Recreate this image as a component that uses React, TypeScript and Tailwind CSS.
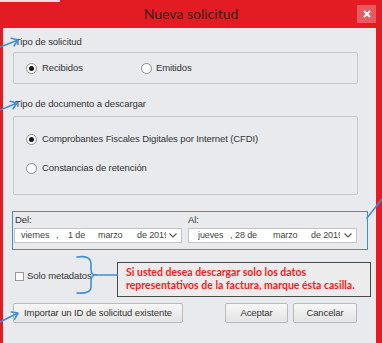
import React from "react";

function Radio({ checked }: { checked?: boolean }) {
  return (
    <span className="w-[11px] h-[11px] rounded-full border border-[#8c8c8c] bg-white flex items-center justify-center shrink-0">
      {checked && <span className="w-[5px] h-[5px] rounded-full bg-[#151515]" />}
    </span>
  );
}

function Chevron() {
  return (
    <svg width="8" height="5" viewBox="0 0 8 5" className="shrink-0">
      <path d="M0.5 0.5 L4 4 L7.5 0.5" fill="none" stroke="#555" strokeWidth="1.1" />
    </svg>
  );
}

function DateSelect({ parts }: { parts: [string, number][] }) {
  return (
    <div className="h-[15px] bg-white border border-[#c4c4c4] flex items-center text-[9px] text-[#444] whitespace-nowrap overflow-hidden">
      {parts.map(([t, w], i) => (
        <span key={i} className="overflow-hidden shrink-0" style={{ width: w }}>
          {t}
        </span>
      ))}
      <span className="ml-auto mr-[4px] flex">
        <Chevron />
      </span>
    </div>
  );
}

function Btn({ children, w }: { children: React.ReactNode; w: string }) {
  return (
    <button
      className={`${w} h-[20px] rounded-[2px] border border-[#b9b9b9] bg-gradient-to-b from-[#f7f7f7] to-[#e4e4e4] text-[9.5px] tracking-[-0.1px] text-[#333] flex items-center justify-center`}
    >
      {children}
    </button>
  );
}

export default function App() {
  return (
    <div
      className="relative w-[382px] h-[343px] bg-[#e31b23] overflow-hidden"
      style={{ fontFamily: '"Liberation Sans", Arial, sans-serif' }}
    >
      <div className="absolute left-0 top-0 w-[60px] h-[2px] bg-[#f4dede]" />
      {/* title bar */}
      <div className="relative h-[28px] flex items-center justify-center">
        <span className="text-[14px] text-[#3b1a1c] pb-[1px]" style={{ fontFamily: "Lato, sans-serif" }}>
          Nueva solicitud
        </span>
        <div className="absolute right-[6px] top-[5px] w-[19px] h-[18px] bg-[#e65a60] flex items-center justify-center">
          <svg width="8" height="8" viewBox="0 0 8 8">
            <path d="M1 1 L7 7 M7 1 L1 7" stroke="white" strokeWidth="2" />
          </svg>
        </div>
      </div>

      {/* content */}
      <div className="ml-[3px] mr-[6px] h-[315px] bg-[#e9eaee] text-[9.5px] tracking-[-0.1px] text-[#333]">
        <div className="pt-[8px] pl-[12px] h-[20px] leading-[12px]">Tipo de solicitud</div>
        <div className="ml-[10px] mt-[4px] w-[345px] h-[32px] border border-[#c9c9cc] rounded-[2px] flex items-center pl-[12px]">
          <label className="flex items-center gap-[5px] w-[115px]">
            <Radio checked />
            <span>Recibidos</span>
          </label>
          <label className="flex items-center gap-[4px]">
            <Radio />
            <span>Emitidos</span>
          </label>
        </div>

        <div className="mt-[14px] pl-[12px] h-[12px] leading-[12px]">Tipo de documento a descargar</div>
        <div className="ml-[10px] mt-[6px] w-[345px] h-[79px] border border-[#c9c9cc] rounded-[2px] flex flex-col pl-[12px] pt-[16px] gap-[17px]">
          <label className="flex items-center gap-[5px] h-[12px]">
            <Radio checked />
            <span>Comprobantes Fiscales Digitales por Internet (CFDI)</span>
          </label>
          <label className="flex items-center gap-[5px] h-[12px]">
            <Radio />
            <span>Constancias de retención</span>
          </label>
        </div>

        <div className="ml-[9px] mt-[16px] w-[356px] h-[39px] border-[1.5px] border-[#3d8fd8] pl-[1px] pt-[2px] flex gap-[6px]">
          <div className="w-[168px]">
            <div className="h-[14px] leading-[12px] pl-[1px]">Del:</div>
            <DateSelect
              parts={[
                ["", 6],
                ["viernes", 35],
                [",", 12],
                ["1 de", 30],
                ["marzo", 39],
                ["de 2019", 29],
              ]}
            />
          </div>
          <div className="w-[169px]">
            <div className="h-[14px] leading-[12px]">Al:</div>
            <DateSelect
              parts={[
                ["", 9],
                ["jueves", 32],
                [",", 5],
                ["28 de", 38],
                ["marzo", 38],
                ["de 2019", 29],
              ]}
            />
          </div>
        </div>

        <div className="flex mt-[12px] h-[35px]">
          <label className="flex items-center gap-[3px] pl-[12px] w-[114px] h-[28px] self-start">
            <span className="w-[9px] h-[9px] border border-[#9a9a9a] bg-white shrink-0" />
            <span>Solo metadatos</span>
          </label>
          <div
            className="w-[254px] h-[35px] border-[1.5px] border-[#4a4a4a] bg-[#ececec] pl-[8px] pt-[3px] text-[10.5px] tracking-normal font-bold text-[#ff1a1a] leading-[13px]"
            style={{ fontFamily: "Lato, sans-serif" }}
          >
            Si usted desea descargar solo los datos
            <br />
            representativos de la factura, marque ésta casilla.
          </div>
        </div>

        <div className="flex mt-[6px] pl-[10px]">
          <Btn w="w-[170px]">Importar un ID de solicitud existente</Btn>
          <div className="ml-[42px] flex gap-[5px]">
            <Btn w="w-[63px]">Aceptar</Btn>
            <Btn w="w-[64px]">Cancelar</Btn>
          </div>
        </div>
      </div>

      {/* annotation overlay */}
      <svg className="absolute left-0 top-0 pointer-events-none" width="382" height="343" viewBox="0 0 382 343">
        <g fill="none" stroke="#3f8fdb" strokeWidth="1.6" strokeLinecap="round" strokeLinejoin="round">
          <path d="M0 47 L18 40 M11.2 38.3 L18 40 L14.1 45.8" />
          <path d="M0 110 L17 103 M10.2 101.3 L17 103 L13.1 108.8" />
          <path d="M0 322 L18 313 M11.1 312 L18 313 L14.7 319.2" />
          <path d="M367 218 L382 199" />
          <path d="M77 257 Q91 255 91 264 L91 270 Q91 275 96 275 Q91 275 91 281 L91 287 Q91 294 77 293" />
          <path d="M96 275 L117 275" />
        </g>
      </svg>
    </div>
  );
}
